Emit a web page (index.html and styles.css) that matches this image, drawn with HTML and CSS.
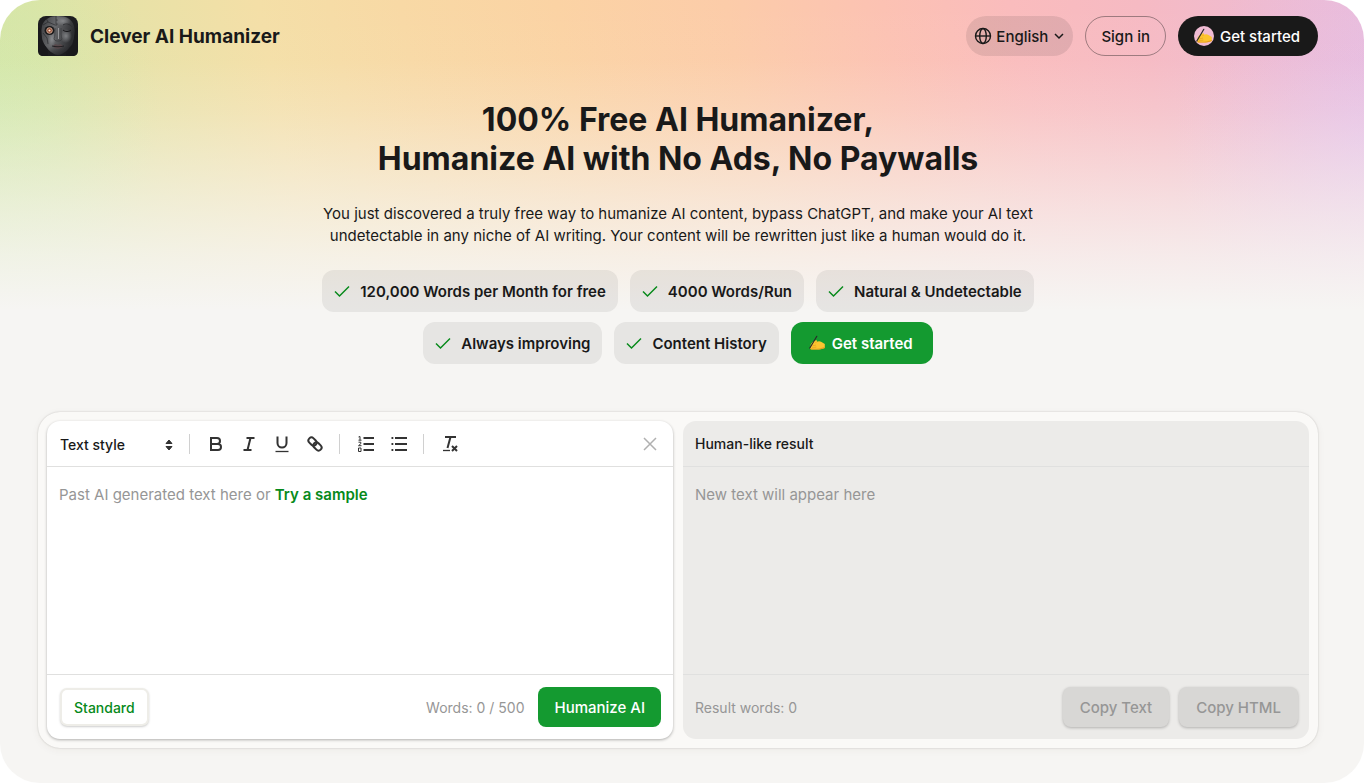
FILE: index.html
```html
<!DOCTYPE html>
<html lang="en">
<head>
    <meta charset="UTF-8">
    <meta name="viewport" content="width=device-width, initial-scale=1.0">
    <title>Clever AI Humanizer</title>
    <link rel="stylesheet" href="styles.css">
</head>
<body>
    <!-- Shared icons -->
    <svg class="sprite" aria-hidden="true">
        <symbol id="check" viewBox="0 0 16 16">
            <path d="M1 8.500l4.500 4.500L15 3.500" fill="none" stroke="currentColor" stroke-width="1.500"/>
        </symbol>
        <symbol id="hand" viewBox="0 0 16 16">
            <path d="M2.500 8.200C4 6.600 5.800 5.200 7.300 5.200c1 0 1 .9.400 1.600 1.600-.7 3.400-.7 4.800.2l3.300 2v4c-2 .6-3.600 1.400-6 1.500H4c-1.600.1-3-.3-3-1.200 0-.5.3-.8.700-1-.5-.5-.5-1.100 0-1.500-.4-.9.100-1.700.8-2.600z" fill="#fdc530"/>
            <path d="M15.800 11.900V13c-2 .6-3.600 1.400-6 1.500H4c-1.600.1-3-.3-3-1.200 3.500.8 9.500.6 14.800-1.400z" fill="#e79c22"/>
            <path d="M3 12.200c1.500.2 3 .2 4.400-.1M3.500 10.400c1.400.2 2.400 0 3.600-.4M7.700 6.800L6.300 8.200" fill="none" stroke="#dd951d" stroke-width=".6"/>
            <path d="M7.800 1.300L4.600 6.800M4.600 6.800L.8 13" stroke="#2b2b2b" stroke-width="1.200" stroke-linecap="round"/>
        </symbol>
    </svg>

    <div class="page">
        <header class="header">
            <a class="brand" href="#">
                <svg class="logo" viewBox="0 0 40 40" aria-hidden="true">
                    <defs>
                        <linearGradient id="face" x1="0" x2="1" y1="0" y2=".3">
                            <stop offset="0" stop-color="#3a3b3e"/>
                            <stop offset=".45" stop-color="#68696c"/>
                            <stop offset=".6" stop-color="#57585b"/>
                            <stop offset="1" stop-color="#2b2c2f"/>
                        </linearGradient>
                        <radialGradient id="cheek">
                            <stop offset="0" stop-color="#999b9e" stop-opacity=".7"/>
                            <stop offset="1" stop-color="#999b9e" stop-opacity="0"/>
                        </radialGradient>
                        <linearGradient id="shade" x1="0" x2="0" y1="0" y2="1">
                            <stop offset=".5" stop-color="#1d1d20" stop-opacity="0"/>
                            <stop offset="1" stop-color="#1d1d20" stop-opacity=".7"/>
                        </linearGradient>
                    </defs>
                    <rect width="40" height="40" rx="8" fill="#1d1d20"/>
                    <path d="M4 10C6 3 12 0 20 0s14 3 16 10c1 6 1 12-2 18-3 5-9 11-14 11S9 33 6 28C3 22 3 16 4 10z" fill="url(#face)"/>
                    <path d="M0 12c2-1 3 0 3 3l1 10 6 9v6H5c-3 0-5-2-5-5zM40 12c-2-1-3 1-3 4l-2 12-7 9v3h7c3 0 5-2 5-5z" fill="#19191c"/>
                    <ellipse cx="28" cy="20" rx="6" ry="7" fill="url(#cheek)"/>
                    <ellipse cx="14" cy="23" rx="4" ry="7" fill="url(#cheek)"/>
                    <ellipse cx="25" cy="5" rx="8" ry="5" fill="url(#cheek)"/>
                    <path d="M17 12c0 5 0 8-1 11 1 2 3 2 4 2s3 0 4-2c-1-3-1-6-1-11" fill="none" stroke="#38393c" stroke-width=".7"/>
                    <path d="M20.500 12v11" stroke="#97989b"/>
                    <path d="M18 0v10M5 9l5-3 7 3M5 17l4 5 1 6M8 2l2 4" fill="none" stroke="#222326" stroke-width=".6"/>
                    <circle cx="19" cy="4" r=".5" fill="#17171a"/><circle cx="19" cy="8" r=".5" fill="#17171a"/>
                    <path d="M25 9c3-2 7-1 9 2" fill="none" stroke="#303134"/>
                    <path d="M25 14c2 2 6 2 8 0" fill="none" stroke="#161619"/>
                    <ellipse cx="11.500" cy="14.500" rx="5" ry="4.500" fill="#19191b"/>
                    <circle cx="11.500" cy="14.500" r="2.800" fill="#8e4b35" stroke="#d9b09a" stroke-width=".9"/>
                    <circle cx="11.500" cy="14.500" r="1.100" fill="#ffe7d4"/>
                    <path d="M4 20h32v10c-4 6-10 10-16 10S8 36 4 30z" fill="url(#shade)"/>
                    <path d="M15 30c2-2 3-2 5-1 2-1 3-1 5 1-2 3-8 4-10 0z" fill="#57484b"/>
                    <path d="M14 30c4 1 8 1 12 0" fill="none" stroke="#151518" stroke-width=".8"/>
                </svg>
                <span>Clever AI Humanizer</span>
            </a>
            <nav class="nav">
                <button class="pill language" type="button">
                    <svg class="globe" viewBox="0 0 18 18" aria-hidden="true">
                        <g fill="none" stroke="currentColor" stroke-width="1.400">
                            <circle cx="9" cy="9" r="7.500"/>
                            <ellipse cx="9" cy="9" rx="3.300" ry="7.500"/>
                            <path d="M1.500 9h15"/>
                        </g>
                    </svg>
                    English
                    <svg class="chevron" viewBox="0 0 10 10" aria-hidden="true">
                        <path d="M1 3l4 4 4-4" fill="none" stroke="currentColor" stroke-width="1.500"/>
                    </svg>
                </button>
                <a class="pill sign-in" href="#">Sign in</a>
                <a class="pill start" href="#">
                    <span class="hand-badge"><svg class="hand" aria-hidden="true"><use href="#hand"/></svg></span>
                    Get started
                </a>
            </nav>
        </header>

        <main>
            <section class="hero">
                <h1>100% Free AI Humanizer,<br>Humanize AI with No Ads, No Paywalls</h1>
                <p>You just discovered a truly free way to humanize AI content, bypass ChatGPT, and make your AI text<br>undetectable in any niche of AI writing. Your content will be rewritten just like a human would do it.</p>
                <ul class="chips">
                    <li class="chip"><svg class="check" aria-hidden="true"><use href="#check"/></svg>120,000 Words per Month for free</li>
                    <li class="chip"><svg class="check" aria-hidden="true"><use href="#check"/></svg>4000 Words/Run</li>
                    <li class="chip"><svg class="check" aria-hidden="true"><use href="#check"/></svg>Natural &amp; Undetectable</li>
                    <li class="chip"><svg class="check" aria-hidden="true"><use href="#check"/></svg>Always improving</li>
                    <li class="chip"><svg class="check" aria-hidden="true"><use href="#check"/></svg>Content History</li>
                    <li><a class="chip chip-start" href="#"><svg class="hand" aria-hidden="true"><use href="#hand"/></svg>Get started</a></li>
                </ul>
            </section>

            <section class="workspace">
                <div class="panel editor">
                    <div class="toolbar">
                        <div class="style-picker">
                            <select aria-label="Text style">
                                <option>Text style</option>
                                <option>Heading 1</option>
                                <option>Heading 2</option>
                                <option>Paragraph</option>
                            </select>
                            <svg viewBox="0 0 8 12" aria-hidden="true">
                                <path d="M4 1l3 3.500H1zM4 11l3-3.500H1z" fill="#333" stroke="#333" stroke-linejoin="round"/>
                            </svg>
                        </div>
                        <span class="divider"></span>
                        <button class="tool" type="button" aria-label="Bold">
                            <svg viewBox="0 0 18 18"><path d="M4 3h6a3 3 0 0 1 0 6H4zM4 9h7a3 3 0 0 1 0 6H4z"/></svg>
                        </button>
                        <button class="tool" type="button" aria-label="Italic">
                            <svg viewBox="0 0 18 18"><path d="M6.500 3h8M3.500 15h8M10.500 3l-3 12"/></svg>
                        </button>
                        <button class="tool" type="button" aria-label="Underline">
                            <svg viewBox="0 0 18 18"><path d="M4.500 1.500V8a4.500 4.500 0 0 0 9 0V1.500"/><path class="thin" d="M2.500 16.500h13"/></svg>
                        </button>
                        <button class="tool" type="button" aria-label="Link">
                            <svg viewBox="0 0 18 18"><g transform="rotate(45 9 9)"><rect x="1" y="6" width="9" height="6" rx="3"/><rect x="8" y="6" width="9" height="6" rx="3"/></g></svg>
                        </button>
                        <span class="divider"></span>
                        <button class="tool" type="button" aria-label="Numbered list">
                            <svg viewBox="0 0 18 18"><path d="M6.500 3H17M6.500 9H17M6.500 15H17"/><path class="fine" d="M1.500 2L3 1.500V5M1.500 5.200h3M1.500 7.200h2.300v1.500L1.500 10.700h3M1.500 13h2.500v3.500H1.500z"/></svg>
                        </button>
                        <button class="tool" type="button" aria-label="Bulleted list">
                            <svg viewBox="0 0 18 18"><path d="M5 3h12M5 9h12M5 15h12M1.500 3h1.800M1.500 9h1.800M1.500 15h1.800"/></svg>
                        </button>
                        <span class="divider"></span>
                        <button class="tool" type="button" aria-label="Clear formatting">
                            <svg viewBox="0 0 18 18"><path d="M4 2h11M9.500 2L6.500 13M11 11l5 5M16 11l-5 5"/><path class="thin" d="M2 15.500h7"/></svg>
                        </button>
                        <button class="clear" type="button" aria-label="Clear text">
                            <svg viewBox="0 0 16 16"><path d="M2 2l12 12M14 2L2 14" fill="none" stroke="currentColor" stroke-width="1.500"/></svg>
                        </button>
                    </div>
                    <div class="content">
                        <textarea id="source" aria-label="AI generated text"></textarea>
                        <div class="hint" id="hint">Past AI generated text here or <button type="button" id="sample">Try a sample</button></div>
                    </div>
                    <div class="footer">
                        <button class="btn btn-mode" type="button">Standard</button>
                        <span class="count">Words: 0 / 500</span>
                        <button class="btn btn-primary" type="button">Humanize AI</button>
                    </div>
                </div>

                <div class="panel result">
                    <div class="toolbar"><label for="result">Human-like result</label></div>
                    <div class="content">
                        <textarea id="result" placeholder="New text will appear here" readonly></textarea>
                    </div>
                    <div class="footer">
                        <span class="result-count">Result words: 0</span>
                        <button class="btn btn-copy" type="button" disabled>Copy Text</button>
                        <button class="btn btn-copy" type="button" disabled>Copy HTML</button>
                    </div>
                </div>
            </section>
        </main>
    </div>

    <script>
        const source = document.getElementById('source');
        const hint = document.getElementById('hint');

        // Hide the hint as soon as there is text
        source.addEventListener('input', () => {
            hint.hidden = source.value !== '';
        });

        document.getElementById('sample').addEventListener('click', () => {
            source.value = 'Artificial intelligence is changing the way people write.';
            hint.hidden = true;
        });
    </script>
</body>
</html>
```

FILE: styles.css
```css
* {
    box-sizing: border-box;
}
body {
    margin: 0;
    background: #fff;
    color: #191919;
    font-family: Inter, "Liberation Sans", sans-serif;
    font-size: 15px;
}
button, select, textarea {
    font: inherit;
    color: inherit;
}
button {
    border: none;
    background: none;
    padding: 0;
    cursor: pointer;
}
a {
    color: inherit;
    text-decoration: none;
}
.sprite {
    display: none;
}
.page {
    min-height: 100vh;
    padding: 16px 46px 35px 38px;
    border-radius: 40px;
    background-color: #f6f5f3;
    background-image:
        linear-gradient(180deg, rgba(246,245,243,0) 0, rgba(246,245,243,.03) 60px, rgba(246,245,243,.2) 110px, rgba(246,245,243,.4) 155px, rgba(246,245,243,.62) 205px, rgba(246,245,243,.82) 255px, #f6f5f3 310px),
        radial-gradient(160px 190px at 0 110px, rgba(204,234,172,.5), rgba(204,234,172,.2) 50%, rgba(204,234,172,0)),
        radial-gradient(190px 200px at 100% 140px, rgba(226,190,236,.6), rgba(226,190,236,.25) 50%, rgba(226,190,236,0)),
        linear-gradient(80deg, #d5e6a6 0, #dbe5a7 6%, #e8e2a7 13%, #f4dfa7 22%, #f8d9a5 32%, #fbd3a4 43%, #fccca9 55%, #fcc2b3 66%, #fabcbd 75%, #f6bac3 84%, #efbbd0 93%, #eabddb 100%);
    background-size: 100% 310px;
    background-repeat: no-repeat;
}

/* Header */
.header {
    display: flex;
    justify-content: space-between;
    align-items: center;
}
.brand {
    display: flex;
    align-items: center;
    gap: 12px;
    font-size: 19px;
    font-weight: 700;
}
.logo {
    width: 40px;
    height: 40px;
}
.nav {
    display: flex;
    gap: 12px;
}
.pill {
    display: flex;
    align-items: center;
    height: 40px;
    padding: 0 15px;
    border-radius: 20px;
    font-weight: 500;
}
.language {
    gap: 4px;
    padding: 0 9px 0 8px;
    background: rgba(25,25,25,.1);
}
.globe {
    width: 18px;
    height: 18px;
}
.chevron {
    width: 10px;
    height: 10px;
    margin-left: 2px;
}
.sign-in {
    border: 1px solid rgba(25,25,25,.4);
}
.start {
    gap: 6px;
    padding: 0 18px 0 16px;
    background: #191919;
    color: #fff;
}
.hand {
    width: 16px;
    height: 16px;
}
.hand-badge {
    display: flex;
    align-items: center;
    justify-content: center;
    width: 20px;
    height: 20px;
    border-radius: 50%;
    background: #f0bbd3;
}

/* Hero */
.hero {
    padding-top: 44px;
    text-align: center;
}
h1 {
    margin: 0;
    font-size: 32px;
    line-height: 39px;
    font-weight: 700;
}
.hero p {
    margin: 25px 0 23px;
    line-height: 22px;
}
.chips {
    display: flex;
    flex-wrap: wrap;
    justify-content: center;
    gap: 10px 12px;
    max-width: 760px;
    margin: 0 auto;
    padding: 0;
    list-style: none;
}
.chip {
    display: flex;
    align-items: center;
    gap: 10px;
    height: 42px;
    padding: 0 12px;
    border-radius: 12px;
    background: rgba(25,25,25,.07);
    font-weight: 600;
}
.chip-start {
    gap: 7px;
    padding: 0 20px 0 18px;
    background: #149a30;
    color: #fff;
}
.check {
    width: 16px;
    height: 16px;
    color: #078a1b;
}

/* Workspace */
.workspace {
    display: grid;
    grid-template-columns: 1fr 1fr;
    gap: 10px;
    margin-top: 48px;
    padding: 9px;
    border-radius: 22px;
    background: #faf9f7;
    box-shadow: 0 0 2px rgba(0,0,0,.2), 0 2px 8px rgba(70,60,20,.05);
}
.panel {
    display: flex;
    flex-direction: column;
    border-radius: 13px;
}
.editor {
    background: #fff;
    box-shadow: 0 1px 3px rgba(0,0,0,.3);
}
.result {
    background: #ecebe9;
}
.toolbar {
    display: flex;
    align-items: center;
    height: 46px;
    padding: 0 10px 0 12px;
    border-bottom: 1px solid #e0e0df;
    font-size: 14px;
    font-weight: 500;
}
.style-picker {
    position: relative;
    width: 122px;
}
.style-picker select {
    width: 100%;
    height: 26px;
    padding: 2px 0 0 1px;
    border: none;
    background: none;
    appearance: none;
}
.style-picker svg {
    position: absolute;
    top: 8px;
    right: 8px;
    width: 8px;
    height: 12px;
    pointer-events: none;
}
.divider {
    width: 1px;
    height: 20px;
    margin: 0 9px 0 8px;
    background: #d0d0d0;
}
.tool {
    display: flex;
    justify-content: center;
    width: 33px;
}
.tool svg {
    width: 18px;
    height: 18px;
    fill: none;
    stroke: #333;
    stroke-width: 2;
}
.tool .thin {
    stroke-width: 1.3;
}
.tool .fine {
    stroke-width: 1;
}
.clear {
    display: flex;
    justify-content: center;
    width: 26px;
    margin-left: auto;
    color: #b0b0b0;
}
.clear svg {
    width: 16px;
    height: 16px;
}
.content {
    position: relative;
    height: 207px;
}
.content textarea {
    display: block;
    width: 100%;
    height: 100%;
    padding: 17px 12px;
    border: none;
    outline: none;
    resize: none;
    background: none;
    line-height: 22px;
}
.content textarea::placeholder {
    color: #969696;
    opacity: 1;
}
.hint {
    position: absolute;
    top: 17px;
    left: 12px;
    line-height: 22px;
    color: #969696;
    pointer-events: none;
}
.hint button {
    color: #078a1b;
    font-weight: 600;
    pointer-events: auto;
}
.footer {
    display: flex;
    align-items: center;
    gap: 10px;
    height: 65px;
    padding: 0 12px;
    border-top: 1px solid #e0e0df;
    color: #969696;
    font-size: 14px;
}
.btn {
    height: 40px;
    padding: 0 16px;
    border-radius: 8px;
    font-size: 15px;
    font-weight: 500;
}
.btn-mode {
    height: 34px;
    margin-left: 3px;
    padding: 0 12px;
    border-radius: 5px;
    background: #fff;
    box-shadow: 0 0 0 2px #eeede8, 0 1px 3px 1px rgba(0,0,0,.4);
    color: #078a1b;
    font-size: 14px;
}
.count {
    margin-left: auto;
    margin-right: 4px;
}
.btn-primary {
    background: #149a30;
    color: #fff;
}
.result-count {
    margin-right: auto;
}
.btn-copy {
    padding: 0 17px;
    background: #d8d7d5;
    box-shadow: 0 1px 3px rgba(0,0,0,.25);
    color: #969696;
    cursor: default;
}
.result .footer {
    padding-right: 11px;
}
```
